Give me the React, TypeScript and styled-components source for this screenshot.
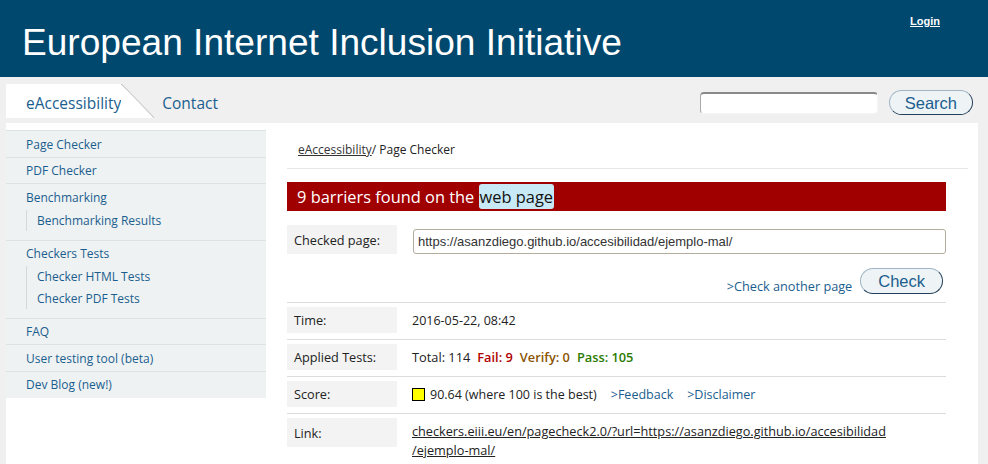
import React from 'react'
import styled, { createGlobalStyle } from 'styled-components'

const GlobalStyle = createGlobalStyle`
  html, body {
    margin: 0;
    padding: 0;
    background: #f0f0f0;
    font-family: "Open Sans", "Liberation Sans", sans-serif;
    font-size: 13px;
    color: #222;
  }
`

const Header = styled.header`
  height: 77px;
  background: #00486e;
  display: flex;
  justify-content: space-between;
  align-items: flex-start;
  padding: 0 48px 0 22px;
`

const Title = styled.h1`
  margin: 20px 0 0;
  font-family: "Liberation Sans", Arial, sans-serif;
  font-weight: normal;
  font-size: 37.1px;
  line-height: 44px;
  color: #fff;
`

const Login = styled.a`
  margin-top: 15px;
  font-family: "Liberation Sans", Arial, sans-serif;
  font-size: 11px;
  font-weight: bold;
  color: #fff;
  text-decoration: underline;
`

const NavBar = styled.nav`
  height: 46px;
  display: flex;
  align-items: flex-start;
  padding: 7px 15px 0 6px;
  box-sizing: border-box;
`

const Tabs = styled.div`
  display: flex;
  align-items: stretch;
  height: 34px;
  flex: 1;
`

const Tab = styled.a<{ $active?: boolean }>`
  display: flex;
  align-items: center;
  padding: ${(p) => (p.$active ? '4px 0 0 20px' : '4px 0 0 8px')};
  background: ${(p) => (p.$active ? '#fff' : 'transparent')};
  font-size: 15.5px;
  color: #1b5e8e;
  text-decoration: none;
`

const TabCorner = styled.span`
  width: 33px;
  background: linear-gradient(
    to top right,
    #fff 49%,
    #c4c8cc 50%,
    transparent 53%
  );
`

const SearchForm = styled.form`
  display: flex;
  align-items: center;
  gap: 11px;
  margin-top: 6px;
`

const SearchInput = styled.input`
  width: 178px;
  height: 22px;
  box-sizing: border-box;
  border: 1px solid #f5f5f5;
  border-top: 2px solid #8a8a8a;
  border-left: 1px solid #aaa;
  border-radius: 4px;
  background: #fff;
`

const PillButton = styled.button`
  font-family: "Liberation Sans", Arial, sans-serif;
  font-size: 16.5px;
  color: #1b5e8e;
  background: #eef3f6;
  border: 1px solid #9fb4c4;
  border-right-color: #23405a;
  border-bottom-color: #23405a;
  border-radius: 13px;
  padding: 0 15px;
  height: 25px;
  line-height: 22px;
`

const Main = styled.main`
  margin: 0 10px 0 6px;
  background: #fff;
  display: flex;
  align-items: flex-start;
  gap: 21px;
  padding-top: 7px;
  min-height: 400px;
`

const Sidebar = styled.ul`
  list-style: none;
  margin: 0;
  padding: 0;
  width: 260px;
  background: #eef2f3;
  border-top: 1px solid #dde2e4;
  font-size: 12px;
`

const SideItem = styled.li`
  border-bottom: 1px solid #dde2e4;
  padding: 5.5px 0 5px 20px;
  line-height: 15px;
  &:last-child {
    border-bottom: none;
    padding-bottom: 6px;
  }
`

const SideGroup = styled(SideItem)`
  padding-bottom: 8.5px;
`

const SideLink = styled.a`
  color: #1b5e8e;
  text-decoration: none;
`

const SubList = styled.ul`
  list-style: none;
  margin: 5px 0 0;
  padding: 0 0 0 10px;
  border-left: 1px solid #d4d8da;
`

const SubItem = styled.li`
  line-height: 21.5px;
`

const Content = styled.section`
  flex: 1;
  padding-right: 10px;
`

const Breadcrumb = styled.div`
  padding: 11px 11px 9px;
  font-size: 12px;
  line-height: 18px;
  border-bottom: 1px solid #e6e6e6;
  a {
    color: #333;
    text-decoration: underline;
  }
`

const Results = styled.div`
  width: 659px;
`

const Banner = styled.h2`
  margin: 13px 0 0;
  height: 29px;
  background: #a00000;
  color: #fff;
  font-weight: normal;
  font-size: 16.4px;
  display: flex;
  align-items: center;
  padding-left: 10px;
`

const Highlight = styled.span`
  background: #c8e9f6;
  color: #111;
  border-radius: 3px;
  padding: 0 1px;
  line-height: 25px;
`

const CheckedRow = styled.div`
  display: flex;
  align-items: flex-end;
  gap: 16px;
  margin-top: 14px;
`

const Label = styled.div<{ $h?: number }>`
  width: 103px;
  height: ${(p) => p.$h ?? 26}px;
  flex: none;
  background: #f3f3f3;
  padding-left: 7px;
  display: flex;
  align-items: center;
  font-size: 12.7px;
`

const UrlInput = styled.input`
  flex: 1;
  height: 25px;
  box-sizing: border-box;
  border: 1px solid #b4ad9f;
  border-radius: 3px;
  font-family: "Liberation Sans", Arial, sans-serif;
  font-size: 13px;
  color: #333;
  padding: 0 4px;
`

const Actions = styled.div`
  display: flex;
  justify-content: flex-end;
  align-items: center;
  gap: 8px;
  padding: 13px 3px 7px 0;
  border-bottom: 1px solid #ddd;
  a {
    color: #1b5e8e;
    text-decoration: none;
    margin-top: 10px;
    font-size: 12.7px;
  }
  button {
    height: 26px;
    padding: 0 17px;
  }
`

const Row = styled.div`
  display: flex;
  gap: 15px;
  padding: 4px 0 6px;
  border-bottom: 1px solid #ddd;
  &:last-child {
    border-bottom: none;
  }
`

const Value = styled.div<{ $size?: number }>`
  padding-top: 4px;
  line-height: 19px;
  font-size: ${(p) => p.$size ?? 12.5}px;
  display: flex;
  align-items: flex-start;
  flex-wrap: wrap;
  gap: 0 7px;
  a {
    color: #222;
    text-decoration: underline;
  }
`

const Stat = styled.span<{ $color: string }>`
  color: ${(p) => p.$color};
  font-weight: 600;
`

const Swatch = styled.span`
  width: 11px;
  height: 11px;
  border: 1px solid #000;
  background: #ffff00;
  margin-top: 3px;
  margin-right: -2px;
`

const InfoLink = styled.a`
  color: #1b5e8e !important;
  text-decoration: none !important;
  margin-left: 7px;
`

const App = () => {
  return (
    <>
      <GlobalStyle />
      <Header>
        <Title>European Internet Inclusion Initiative</Title>
        <Login href="#">Login</Login>
      </Header>
      <NavBar>
        <Tabs>
          <Tab $active href="#">eAccessibility</Tab>
          <TabCorner />
          <Tab href="#">Contact</Tab>
        </Tabs>
        <SearchForm onSubmit={(e) => e.preventDefault()}>
          <SearchInput type="text" />
          <PillButton type="submit">Search</PillButton>
        </SearchForm>
      </NavBar>
      <Main>
        <Sidebar>
          <SideItem><SideLink href="#">Page Checker</SideLink></SideItem>
          <SideItem><SideLink href="#">PDF Checker</SideLink></SideItem>
          <SideGroup>
            <SideLink href="#">Benchmarking</SideLink>
            <SubList>
              <SubItem><SideLink href="#">Benchmarking Results</SideLink></SubItem>
            </SubList>
          </SideGroup>
          <SideGroup>
            <SideLink href="#">Checkers Tests</SideLink>
            <SubList>
              <SubItem><SideLink href="#">Checker HTML Tests</SideLink></SubItem>
              <SubItem><SideLink href="#">Checker PDF Tests</SideLink></SubItem>
            </SubList>
          </SideGroup>
          <SideItem><SideLink href="#">FAQ</SideLink></SideItem>
          <SideItem><SideLink href="#">User testing tool (beta)</SideLink></SideItem>
          <SideItem><SideLink href="#">Dev Blog (new!)</SideLink></SideItem>
        </Sidebar>
        <Content>
          <Breadcrumb>
            <a href="#">eAccessibility</a>/ Page Checker
          </Breadcrumb>
          <Results>
            <Banner>
              9 barriers found on the&nbsp;<Highlight>web page</Highlight>
            </Banner>
            <CheckedRow>
              <Label $h={29}>Checked page:</Label>
              <UrlInput
                readOnly
                value="https://asanzdiego.github.io/accesibilidad/ejemplo-mal/"
              />
            </CheckedRow>
            <Actions>
              <a href="#">&gt;Check another page</a>
              <PillButton type="button">Check</PillButton>
            </Actions>
            <Row>
              <Label>Time:</Label>
              <Value>2016-05-22, 08:42</Value>
            </Row>
            <Row>
              <Label>Applied Tests:</Label>
              <Value $size={12.8}>
                <span>Total: 114</span>
                <Stat $color="#b00000">Fail: 9</Stat>
                <Stat $color="#8a5400">Verify: 0</Stat>
                <Stat $color="#2a7a00">Pass: 105</Stat>
              </Value>
            </Row>
            <Row>
              <Label>Score:</Label>
              <Value>
                <Swatch />
                <span>90.64 (where 100 is the best)</span>
                <InfoLink href="#">&gt;Feedback</InfoLink>
                <InfoLink href="#">&gt;Disclaimer</InfoLink>
              </Value>
            </Row>
            <Row>
              <Label $h={29}>Link:</Label>
              <Value $size={12.7}>
                <a href="#">
                  checkers.eiii.eu/en/pagecheck2.0/?url=https://asanzdiego.github.io/accesibilidad
                  <br />
                  /ejemplo-mal/
                </a>
              </Value>
            </Row>
          </Results>
        </Content>
      </Main>
    </>
  )
}

export default App
